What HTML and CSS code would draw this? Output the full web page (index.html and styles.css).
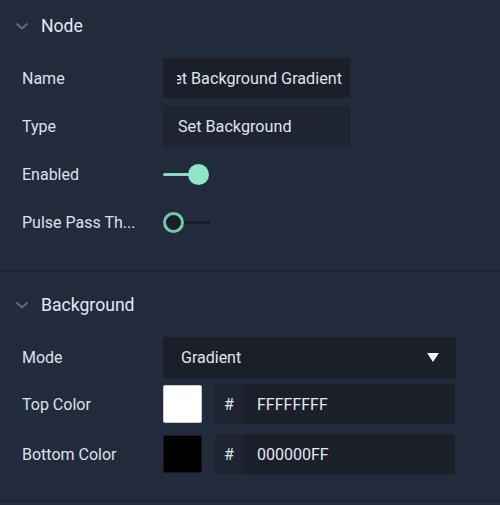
FILE: index.html
```html
<!DOCTYPE html>
<html>
<head>
<meta charset="utf-8">
<link rel="stylesheet" href="styles.css">
</head>
<body>
<div class="panel">
  <section class="section section-node">
    <div class="head">
      <svg class="chev" width="14" height="8" viewBox="0 0 14 8"><polyline points="1.5,1.5 7,6.5 12.5,1.5" fill="none" stroke="#5f6a7a" stroke-width="2"/></svg>
      <span class="head-title">Node</span>
    </div>
    <div class="rows rows-node">
      <div class="row">
        <div class="label">Name</div>
        <div class="field field-name"><div class="clip"><span>Set Background Gradient</span></div></div>
      </div>
      <div class="row">
        <div class="label">Type</div>
        <div class="field field-type">Set Background</div>
      </div>
      <div class="row">
        <div class="label">Enabled</div>
        <div class="toggle on"><span class="track"></span><span class="knob"></span></div>
      </div>
      <div class="row">
        <div class="label">Pulse Pass Th...</div>
        <div class="toggle off"><span class="knob"></span><span class="track"></span></div>
      </div>
    </div>
  </section>
  <section class="section section-bg">
    <div class="head">
      <svg class="chev" width="14" height="8" viewBox="0 0 14 8"><polyline points="1.5,1.5 7,6.5 12.5,1.5" fill="none" stroke="#5f6a7a" stroke-width="2"/></svg>
      <span class="head-title">Background</span>
    </div>
    <div class="rows rows-bg">
      <div class="row row-mode">
        <div class="label">Mode</div>
        <div class="select"><span>Gradient</span><svg width="12" height="9" viewBox="0 0 12 9"><polygon points="0,0 12,0 6,9" fill="#f2f4f7"/></svg></div>
      </div>
      <div class="row row-color">
        <div class="label">Top Color</div>
        <div class="swatch swatch-white"></div>
        <div class="hex"><span class="hash">#</span><span class="hex-val">FFFFFFFF</span></div>
      </div>
      <div class="row row-color">
        <div class="label">Bottom Color</div>
        <div class="swatch swatch-black"></div>
        <div class="hex"><span class="hash">#</span><span class="hex-val">000000FF</span></div>
      </div>
    </div>
  </section>
</div>
</body>
</html>
```

FILE: styles.css
```css
html, body {
  margin: 0;
  padding: 0;
  background: #222b3b;
}
body {
  font-family: Roboto, "Liberation Sans", sans-serif;
  color: #dde4ec;
  width: 500px;
  height: 505px;
  overflow: hidden;
}
.panel {
  display: flex;
  flex-direction: column;
}
.section {
  border-bottom: 2px solid #1b2230;
}
.section-node {
  padding-bottom: 24px;
}
.section-bg {
  padding-top: 7px;
  padding-bottom: 26px;
}
.head {
  height: 52px;
  display: flex;
  align-items: center;
  padding-left: 15px;
  gap: 12px;
}
.head-title {
  font-size: 17.6px;
  color: #e2e9f1;
}
.rows {
  display: flex;
  flex-direction: column;
}
.rows-node {
  padding-top: 2px;
}
.rows-bg {
  padding-top: 6px;
  gap: 6px;
}
.row {
  display: flex;
  align-items: center;
  height: 48px;
}
.row-mode {
  height: 41px;
}
.row-color {
  height: 40px;
}
.row-color + .row-color {
  margin-top: 4px;
}
.label {
  width: 141px;
  padding-left: 22px;
  font-size: 16px;
  color: #dbe2ea;
  white-space: nowrap;
}
.field {
  width: 187px;
  height: 40px;
  display: flex;
  align-items: center;
  font-size: 16.2px;
  box-sizing: border-box;
}
.field-name {
  background: #1a1f29;
  padding: 0 8px 0 14px;
}
.clip {
  flex: 1;
  overflow: hidden;
  display: flex;
  justify-content: flex-end;
  white-space: nowrap;
}
.field-type {
  background: #1e2431;
  padding-left: 15px;
  height: 41px;
}
.toggle {
  display: flex;
  align-items: center;
  width: 47px;
  height: 22px;
}
.toggle .track {
  height: 3px;
  border-radius: 2px;
}
.toggle .knob {
  width: 21px;
  height: 21px;
  border-radius: 50%;
  box-sizing: border-box;
  flex: none;
}
.toggle.on .track {
  width: 27px;
  background: #86dcbc;
}
.toggle.on .knob {
  background: #8ee6c4;
  margin-left: -2px;
}
.toggle.off .knob {
  background: #191e28;
  border: 3px solid #71c9a6;
}
.toggle.off .track {
  width: 26px;
  background: #171c26;
}
.select {
  width: 293px;
  height: 41px;
  background: #1a1f2a;
  border-radius: 3px;
  display: flex;
  align-items: center;
  justify-content: space-between;
  padding: 0 17px 0 18px;
  box-sizing: border-box;
  font-size: 16px;
  color: #e0e6ee;
}
.swatch {
  width: 39px;
  height: 38px;
  border-radius: 2px;
  box-sizing: border-box;
}
.swatch-white {
  background: #ffffff;
  border: 1px solid #c9ccd2;
}
.swatch-black {
  background: #000000;
  border: 1px solid #141820;
}
.hex {
  margin-left: 13px;
  width: 240px;
  height: 40px;
  display: flex;
  background: #1e2432;
  font-size: 16px;
}
.hash {
  width: 28px;
  display: flex;
  align-items: center;
  justify-content: center;
  color: #dde3eb;
}
.hex-val {
  flex: 1;
  background: #1a1f29;
  display: flex;
  align-items: center;
  padding-left: 14px;
  color: #e3e8ef;
}
```
